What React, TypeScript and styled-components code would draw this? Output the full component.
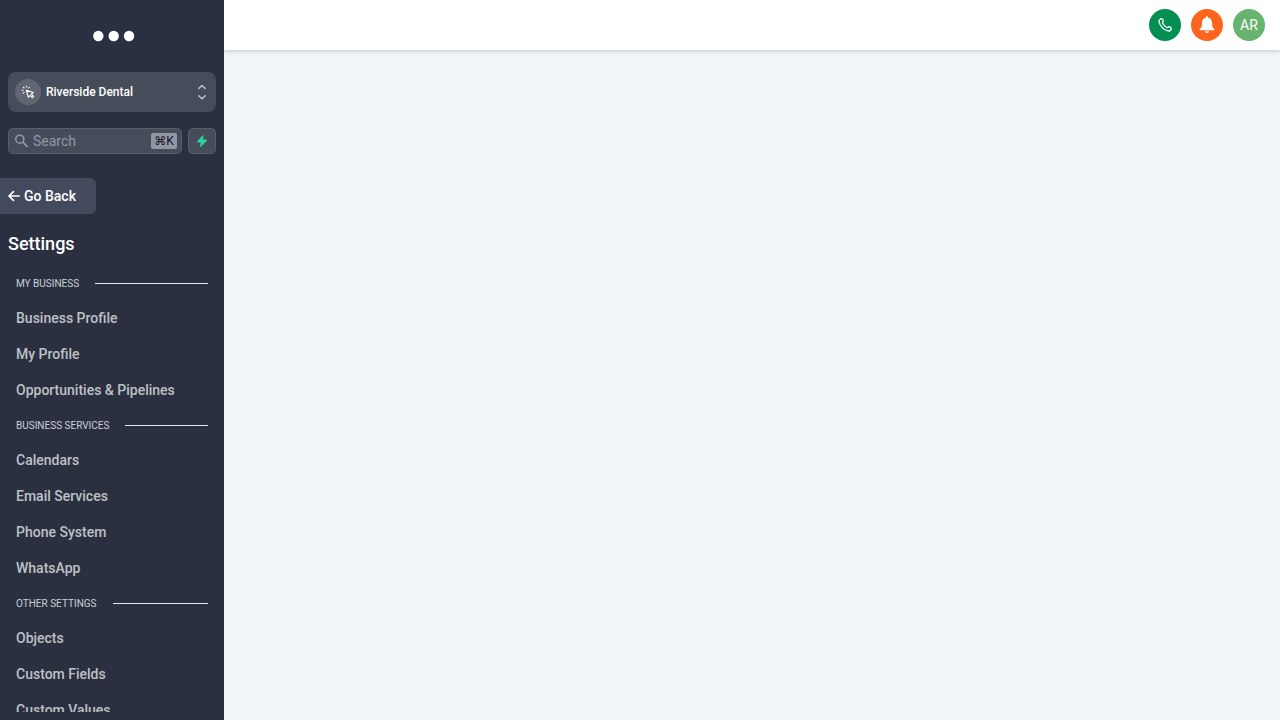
import React from "react";
import styled, { createGlobalStyle } from "styled-components";

const GlobalStyle = createGlobalStyle`
  *, *::before, *::after { box-sizing: border-box; }
  body {
    margin: 0;
    font-family: Roboto, "Liberation Sans", sans-serif;
    background: #f0f5fa;
  }
  button, input { font: inherit; color: inherit; }
  svg { display: block; flex: none; }
`;

const Shell = styled.div`
  display: flex;
  height: 100vh;
`;

const Sidebar = styled.aside`
  display: flex;
  flex-direction: column;
  flex: none;
  width: 224px;
  padding-bottom: 8px;
  background: #2a3040;
  color: #fff;
`;

const Brand = styled.a`
  display: flex;
  align-items: center;
  justify-content: center;
  height: 72px;
  padding-left: 4px;
`;

const AccountButton = styled.button`
  display: flex;
  align-items: center;
  gap: 5px;
  flex: none;
  height: 40px;
  margin: 0 8px;
  padding: 0 8px 0 7px;
  border: 0;
  border-radius: 8px;
  background: #444d59;
  font-size: 12px;
  font-weight: 500;
  text-align: left;
`;

const AccountBadge = styled.span`
  display: grid;
  place-items: center;
  width: 26px;
  height: 26px;
  border-radius: 50%;
  background: #606772;
`;

const AccountName = styled.span`
  flex: 1;
`;

const Tools = styled.div`
  display: flex;
  gap: 6px;
  margin: 16px 8px 24px;
`;

const SearchBox = styled.label`
  display: flex;
  align-items: center;
  flex: 1;
  min-width: 0;
  height: 26px;
  padding: 0 4px 0 6px;
  border: 1px solid #56606b;
  border-radius: 5px;
  background: #444d59;
  color: #9298a5;
`;

const SearchInput = styled.input`
  flex: 1;
  min-width: 0;
  height: 24px;
  padding: 0 0 0 4px;
  border: 0;
  outline: 0;
  background: transparent;
  font-size: 14px;
  &::placeholder { color: #9298a5; opacity: 1; }
`;

const Shortcut = styled.kbd`
  width: 26px;
  height: 16px;
  border-radius: 2px;
  background: #9196a5;
  color: #10131a;
  font: 12px/16px Roboto, "DejaVu Sans", sans-serif;
  text-align: center;
  white-space: nowrap;
`;

const QuickButton = styled.button`
  display: grid;
  place-items: center;
  width: 28px;
  height: 26px;
  padding: 0;
  border: 1px solid #56606b;
  border-radius: 5px;
  background: #444d59;
`;

const BackButton = styled.button`
  display: flex;
  align-items: center;
  gap: 4px;
  flex: none;
  align-self: flex-start;
  width: 96px;
  height: 36px;
  padding: 0 8px;
  border: 0;
  border-radius: 0 6px 6px 0;
  background: #434a5e;
  font-size: 14px;
  font-weight: 500;
`;

const Title = styled.h1`
  margin: 16px 8px 8px;
  font-size: 18px;
  line-height: 28px;
  font-weight: 500;
`;

const Nav = styled.nav`
  flex: 1;
  min-height: 0;
  overflow-y: auto;
  scrollbar-width: none;
`;

const SectionHeading = styled.h2`
  display: flex;
  align-items: center;
  gap: 16px;
  height: 34px;
  margin: 0;
  padding: 0 16px;
  color: #cbd0d8;
  font-size: 10px;
  font-weight: 400;
  text-transform: uppercase;
  &::after {
    content: "";
    flex: 1;
    height: 1px;
    background: #e2e8f0;
  }
`;

const NavItem = styled.a`
  display: block;
  padding: 0 16px;
  color: #bfc1c6;
  font-size: 14px;
  line-height: 36px;
  font-weight: 500;
  text-decoration: none;
`;

const Content = styled.div`
  display: flex;
  flex-direction: column;
  flex: 1;
  min-width: 0;
`;

const Header = styled.header`
  display: flex;
  align-items: center;
  justify-content: flex-end;
  gap: 10px;
  height: 50px;
  padding: 0 15px;
  background: #fff;
  box-shadow: 0 1px 4px rgba(0, 0, 0, 0.2);
  clip-path: inset(0 0 -6px 0);
`;

const RoundButton = styled.button<{ $color: string }>`
  display: grid;
  place-items: center;
  width: 32px;
  height: 32px;
  padding: 0;
  border: 0;
  border-radius: 50%;
  background: ${(p) => p.$color};
  color: #fff;
  font-size: 14px;
`;

const Main = styled.main`
  flex: 1;
`;

const sections = [
  { name: "My Business", items: ["Business Profile", "My Profile", "Opportunities & Pipelines"] },
  { name: "Business Services", items: ["Calendars", "Email Services", "Phone System", "WhatsApp"] },
  { name: "Other Settings", items: ["Objects", "Custom Fields", "Custom Values"] },
];

const DotsLogo = () => (
  <svg width="42" height="12" viewBox="0 0 42 12" fill="#fff" aria-hidden="true">
    <circle cx="5.3" cy="6" r="5.2" />
    <circle cx="20.7" cy="6" r="5.2" />
    <circle cx="36" cy="6" r="5.2" />
  </svg>
);

const ClickIcon = () => (
  <svg width="14" height="14" viewBox="0 0 24 24" fill="none" stroke="#fff" strokeWidth="1.9" strokeLinecap="round" strokeLinejoin="round" aria-hidden="true">
    <path d="M9 3.5V2M5.1 5.1 4 4M5.1 13 4 14.1M13 5.1 14.1 4M3.5 9H2" />
    <path d="m9 9 3.7 12 3-3.3 3.8 3.8 2-2-3.8-3.8 3.3-3z" />
  </svg>
);

const ChevronsIcon = () => (
  <svg width="12" height="18" viewBox="0 0 12 18" fill="none" stroke="#c4c8ce" strokeWidth="1.4" strokeLinecap="round" strokeLinejoin="round" aria-hidden="true">
    <path d="m2.7 5.4 3.3-3 3.3 3M2.7 12.8l3.3 3 3.3-3" />
  </svg>
);

const SearchIcon = () => (
  <svg width="14" height="14" viewBox="0 0 14 14" fill="none" stroke="currentColor" strokeWidth="1.6" aria-hidden="true">
    <circle cx="4.8" cy="5.2" r="4" />
    <path d="m7.8 8.2 4.7 4.7" strokeWidth="1.8" />
  </svg>
);

const BoltIcon = () => (
  <svg width="12" height="14" viewBox="0 0 12 14" fill="#2dd298" stroke="#2dd298" strokeWidth="1" strokeLinejoin="round" aria-hidden="true">
    <path d="M7 1.5 1.2 7.900h3.900l-.4 4.700 6.200-6.500H6.700z" />
  </svg>
);

const BackIcon = () => (
  <svg width="12" height="12" viewBox="0 0 12 12" fill="none" stroke="currentColor" strokeWidth="1.7" strokeLinecap="round" strokeLinejoin="round" aria-hidden="true">
    <path d="M5.4 1.6 1 6l4.4 4.4M1.2 6h10" />
  </svg>
);

const PhoneIcon = () => (
  <svg width="16" height="16" viewBox="0 0 24 24" fill="none" stroke="currentColor" strokeWidth="1.9" strokeLinecap="round" strokeLinejoin="round" aria-hidden="true">
    <path d="M8.38 8.853a14.6 14.6 0 0 0 2.847 4.01 14.6 14.6 0 0 0 4.01 2.847c.124.06.187.09.265.112.28.082.625.023.862-.147.067-.048.124-.105.239-.219.35-.35.524-.524.7-.639a2 2 0 0 1 2.18 0c.176.115.35.29.7.64l.195.194c.532.531.797.797.942 1.082a2 2 0 0 1 0 1.806c-.145.285-.41.55-.942 1.082l-.157.158c-.53.53-.795.794-1.155.997-.4.224-1.02.385-1.478.384-.413-.001-.695-.081-1.26-.241a19 19 0 0 1-8.283-4.874 19 19 0 0 1-4.874-8.284c-.16-.564-.24-.846-.241-1.26a3.4 3.4 0 0 1 .384-1.477c.203-.36.468-.625.997-1.155l.158-.158c.531-.531.797-.797 1.082-.941a2 2 0 0 1 1.805 0c.286.144.552.41 1.083.941l.195.195c.35.35.524.525.639.7a2 2 0 0 1 0 2.181c-.115.176-.29.35-.64.7-.113.114-.17.172-.218.238-.17.238-.229.582-.147.863.023.078.053.14.112.265z" />
  </svg>
);

const BellIcon = () => (
  <svg width="16" height="18" viewBox="0 0 16 18" fill="currentColor" aria-hidden="true">
    <path d="M8 .3c-.7 0-1.1.5-1.1 1.1v.3C4.5 2.2 3 3.9 3 6.4c0 3.7-.7 5.2-2.1 6.4-.7.6-.4 1.5.5 1.5h13.2c.9 0 1.2-.9.5-1.5C13.7 11.6 13 10.1 13 6.400c0-2.500-1.500-4.200-3.900-4.700v-.3C9.100.8 8.700.3 8 .3zM5.900 15.300a2.100 1.800 0 0 0 4.200 0z" />
  </svg>
);

export default function App() {
  return (
    <>
      <GlobalStyle />
      <Shell>
        <Sidebar>
          <Brand href="#home" aria-label="Home"><DotsLogo /></Brand>
          <AccountButton type="button">
            <AccountBadge><ClickIcon /></AccountBadge>
            <AccountName>Riverside Dental</AccountName>
            <ChevronsIcon />
          </AccountButton>
          <Tools>
            <SearchBox>
              <SearchIcon />
              <SearchInput type="text" placeholder="Search" aria-label="Search" />
              <Shortcut>⌘K</Shortcut>
            </SearchBox>
            <QuickButton type="button" aria-label="Quick actions"><BoltIcon /></QuickButton>
          </Tools>
          <BackButton type="button"><BackIcon />Go Back</BackButton>
          <Title>Settings</Title>
          <Nav aria-label="Settings">
            {sections.map((section) => (
              <section key={section.name}>
                <SectionHeading>{section.name}</SectionHeading>
                {section.items.map((item) => (
                  <NavItem key={item} href="#settings">{item}</NavItem>
                ))}
              </section>
            ))}
          </Nav>
        </Sidebar>
        <Content>
          <Header>
            <RoundButton type="button" $color="#038f52" aria-label="Call"><PhoneIcon /></RoundButton>
            <RoundButton type="button" $color="#ff641e" aria-label="Notifications"><BellIcon /></RoundButton>
            <RoundButton type="button" $color="#68b36f">AR</RoundButton>
          </Header>
          <Main />
        </Content>
      </Shell>
    </>
  );
}
